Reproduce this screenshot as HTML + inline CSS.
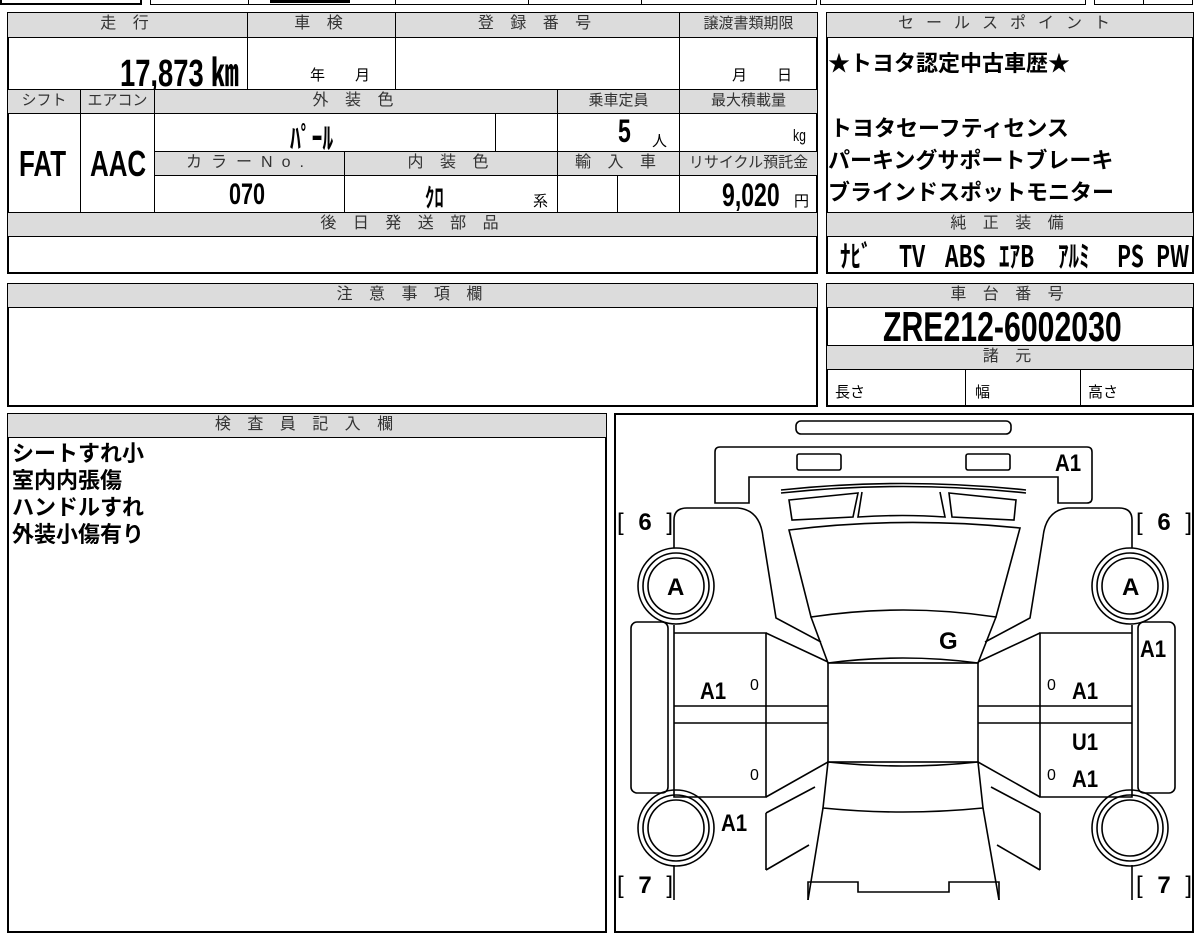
<!DOCTYPE html>
<html><head><meta charset="utf-8"><style>
*{margin:0;padding:0}
body{width:1200px;height:900px;background:#fff;position:relative;overflow:hidden;font-family:"Liberation Sans","Noto Sans CJK JP",sans-serif;color:#000}
.c{position:absolute;border:1.5px solid #000;box-sizing:border-box}
.h{background:#dcdcdc;color:#333;font-size:16px;text-align:center;letter-spacing:6px;line-height:22px;white-space:nowrap;overflow:hidden}
.h.s{letter-spacing:0;font-size:15px}
.t{position:absolute;white-space:nowrap;font-weight:bold}
.cond{display:inline-block;transform:scaleX(.72);transform-origin:left center}
.j{font-weight:bold;font-size:22px}
.eq{position:absolute;top:236px;height:36px;line-height:36px;font-size:30px;font-weight:bold;white-space:nowrap;font-family:"Noto Sans CJK JP",sans-serif}
.eq span{display:inline-block;transform:scaleX(.7);transform-origin:left center}
</style></head><body>
<!-- top strip -->
<div class="c" style="left:0;top:-20px;width:142px;height:25px;border-width:2px"></div>
<div class="c" style="left:150px;top:-20px;width:99px;height:25px"></div>
<div class="c" style="left:248px;top:-20px;width:148px;height:25px"></div>
<div style="position:absolute;left:270px;top:0;width:80px;height:3px;background:#000"></div>
<div class="c" style="left:395px;top:-20px;width:134px;height:25px"></div>
<div class="c" style="left:528px;top:-20px;width:114px;height:25px"></div>
<div class="c" style="left:641px;top:-20px;width:176px;height:25px"></div>
<div class="c" style="left:820px;top:-20px;width:266px;height:25px"></div>
<div class="c" style="left:1094px;top:-20px;width:50px;height:25px"></div>
<div class="c" style="left:1143px;top:-20px;width:50px;height:25px"></div>

<!-- main table -->
<div class="c" style="left:7px;top:12px;width:811px;height:262px;border-width:2px"></div>
<div class="c h" style="left:7px;top:12px;width:241px;height:26px">走 行</div>
<div class="c h" style="left:247px;top:12px;width:149px;height:26px">車 検</div>
<div class="c h" style="left:395px;top:12px;width:285px;height:26px">登 録 番 号</div>
<div class="c h s" style="left:679px;top:12px;width:139px;height:26px">譲渡書類期限</div>
<div class="c" style="left:7px;top:37px;width:241px;height:53px"></div>
<div class="c" style="left:247px;top:37px;width:149px;height:53px"></div>
<div class="c" style="left:395px;top:37px;width:285px;height:53px"></div>
<div class="c" style="left:679px;top:37px;width:139px;height:53px"></div>
<div class="t" style="left:120px;top:42px;font-size:38px"><span class="cond">17,873 ㎞</span></div>
<div class="t" style="left:310px;top:64px;font-size:15px;font-weight:normal">年　　月</div>
<div class="t" style="left:732px;top:64px;font-size:15px;font-weight:normal">月　　日</div>

<div class="c h s" style="left:7px;top:89px;width:74px;height:25px">シフト</div>
<div class="c h s" style="left:80px;top:89px;width:75px;height:25px">エアコン</div>
<div class="c h" style="left:154px;top:89px;width:404px;height:25px">外 装 色</div>
<div class="c h s" style="left:557px;top:89px;width:123px;height:25px">乗車定員</div>
<div class="c h s" style="left:679px;top:89px;width:139px;height:25px">最大積載量</div>
<div class="c" style="left:7px;top:113px;width:74px;height:100px"></div>
<div class="c" style="left:80px;top:113px;width:75px;height:100px"></div>
<div class="t" style="left:19px;top:143px;font-size:36px"><span class="cond">FAT</span></div>
<div class="t" style="left:90px;top:143px;font-size:36px"><span class="cond">AAC</span></div>
<div class="c" style="left:154px;top:113px;width:342px;height:39px"></div>
<div class="c" style="left:495px;top:113px;width:63px;height:39px"></div>
<div class="c" style="left:557px;top:113px;width:123px;height:39px"></div>
<div class="c" style="left:679px;top:113px;width:139px;height:39px"></div>
<div class="t" style="left:290px;top:114px;font-size:30px"><span class="cond">ﾊﾟｰﾙ</span></div>
<div class="t" style="left:618px;top:113px;font-size:32px"><span class="cond">5</span></div>
<div class="t" style="left:652px;top:130px;font-size:15px;font-weight:normal">人</div>
<div class="t" style="left:793px;top:126px;font-size:17px;font-weight:normal"><span class="cond">kg</span></div>
<div class="c h" style="left:154px;top:151px;width:191px;height:25px;letter-spacing:9px">カラーNo.</div>
<div class="c h" style="left:344px;top:151px;width:214px;height:25px">内 装 色</div>
<div class="c h" style="left:557px;top:151px;width:123px;height:25px">輸 入 車</div>
<div class="c h s" style="left:679px;top:151px;width:139px;height:25px">リサイクル預託金</div>
<div class="c" style="left:154px;top:175px;width:191px;height:38px"></div>
<div class="c" style="left:344px;top:175px;width:214px;height:38px"></div>
<div class="c" style="left:557px;top:175px;width:61px;height:38px"></div>
<div class="c" style="left:617px;top:175px;width:63px;height:38px"></div>
<div class="c" style="left:679px;top:175px;width:139px;height:38px"></div>
<div class="t" style="left:229px;top:178px;font-size:30px"><span class="cond">070</span></div>
<div class="t" style="left:425px;top:178px;font-size:26px"><span class="cond">ｸﾛ</span></div>
<div class="t" style="left:533px;top:190px;font-size:15px;font-weight:normal">系</div>
<div class="t" style="left:722px;top:177px;font-size:32px"><span class="cond">9,020</span></div>
<div class="t" style="left:794px;top:190px;font-size:15px;font-weight:normal">円</div>
<div class="c h" style="left:7px;top:212px;width:811px;height:25px">後 日 発 送 部 品</div>

<!-- sales point -->
<div class="c" style="left:826px;top:12px;width:368px;height:262px;border-width:2px"></div>
<div class="c h" style="left:826px;top:12px;width:368px;height:26px;letter-spacing:12px">セールスポイント</div>
<div class="t j" style="left:828px;top:46px">★トヨタ認定中古車歴★</div>
<div class="t j" style="left:830px;top:111px">トヨタセーフティセンス</div>
<div class="t j" style="left:828px;top:143px">パーキングサポートブレーキ</div>
<div class="t j" style="left:828px;top:175px">ブラインドスポットモニター</div>
<div class="c h" style="left:826px;top:212px;width:368px;height:25px">純 正 装 備</div>
<div class="eq" style="left:840px"><span>ﾅﾋﾞ</span></div>
<div class="eq" style="left:899px"><span>TV</span></div>
<div class="eq" style="left:945px"><span>ABS</span></div>
<div class="eq" style="left:999px"><span>ｴｱB</span></div>
<div class="eq" style="left:1058px"><span>ｱﾙﾐ</span></div>
<div class="eq" style="left:1117px"><span>PS</span></div>
<div class="eq" style="left:1156px"><span>PW</span></div>

<!-- notes -->
<div class="c" style="left:7px;top:283px;width:811px;height:124px;border-width:2px"></div>
<div class="c h" style="left:7px;top:283px;width:811px;height:25px">注 意 事 項 欄</div>

<!-- chassis -->
<div class="c" style="left:826px;top:283px;width:368px;height:124px;border-width:2px"></div>
<div class="c h" style="left:826px;top:283px;width:368px;height:25px">車 台 番 号</div>
<div class="t" style="left:883px;top:303px;font-size:42px"><span class="cond">ZRE212-6002030</span></div>
<div class="c h" style="left:826px;top:345px;width:368px;height:25px">諸 元</div>
<div class="c" style="left:826px;top:369px;width:140px;height:38px"></div>
<div class="c" style="left:965px;top:369px;width:116px;height:38px"></div>
<div class="t" style="left:835px;top:381px;font-size:15px;font-weight:normal">長さ</div>
<div class="t" style="left:975px;top:381px;font-size:15px;font-weight:normal">幅</div>
<div class="t" style="left:1088px;top:381px;font-size:15px;font-weight:normal">高さ</div>

<!-- inspector -->
<div class="c" style="left:7px;top:413px;width:600px;height:520px;border-width:2px"></div>
<div class="c h" style="left:7px;top:413px;width:600px;height:25px">検 査 員 記 入 欄</div>
<div class="t j" style="left:12px;top:440px;line-height:27px;font-size:22px">シートすれ小<br>室内内張傷<br>ハンドルすれ<br>外装小傷有り</div>

<!-- diagram -->
<div class="c" style="left:614px;top:413px;width:580px;height:520px;border-width:2px"></div>
<svg style="position:absolute;left:0;top:0" width="1200" height="900" fill="none" stroke="#000" stroke-width="1.6">
<rect x="796" y="421" width="215" height="13" rx="5"/>
<path d="M715,503 L715,452 Q715,447 720,447 L1087,447 Q1092,447 1092,452 L1092,498 Q1092,503 1087,503 L1058,503 L1058,477 L749,477 L749,503 Z"/>
<rect x="797" y="454" width="44" height="16" rx="2"/>
<rect x="966" y="454" width="44" height="16" rx="2"/>
<path d="M781,490 Q903,477 1026,490 M781,493 Q903,480 1026,493"/>
<path d="M789,500 L858,493 L853,517 L792,520 Z"/>
<path d="M949,493 L1016,500 L1014,520 L952,517 Z"/>
<path d="M862,492 L858,517 Q903,514 945,517 L940,492"/>
<path d="M789,530 Q903,516 1020,528 L996,617 Q903,603 811,617 Z"/>
<path d="M811,617 L828,663 Q903,653 978,663 L996,617"/>
<rect x="828" y="663" width="150" height="99"/>
<path d="M828,762 Q903,770 978,762 L983,808 Q903,816 823,808 Z"/>
<path d="M823,808 L808,900 M983,808 L999,900"/>
<path d="M808,900 L808,882 L858,882 L858,892 L949,892 L949,882 L999,882 L999,900"/>
<g id="side">
<path d="M674,548 L674,520 Q674,508 687,508 L738,508 Q760,510 763,537 L776,618 L821,642"/>
<path d="M674,625 L674,797 L766,797 L766,633 L674,633"/>
<path d="M674,706 L828,706 M674,723 L828,723"/>
<path d="M766,633 L828,662 M766,797 L828,762"/>
<path d="M766,813 L815,787 M766,870 L809,845 M766,813 L766,870"/>
<path d="M674,865 L674,900"/>
<rect x="631" y="622" width="37" height="171" rx="6"/>
<circle cx="676" cy="586" r="38"/><circle cx="676" cy="586" r="33"/><circle cx="676" cy="586" r="28"/>
<circle cx="676" cy="828" r="38"/><circle cx="676" cy="828" r="33"/><circle cx="676" cy="828" r="28"/>
</g>
<use href="#side" transform="matrix(-1 0 0 1 1806 0)"/>
</svg>
<div style="position:absolute;font-weight:bold;font-size:24px;white-space:nowrap">
<span style="position:absolute;left:1055px;top:450px"><span class="cond" style="transform:scaleX(.85)">A1</span></span>
<span style="position:absolute;left:617px;top:509px;font-weight:normal;letter-spacing:4px">[ <b>6</b> ]</span>
<span style="position:absolute;left:1136px;top:509px;font-weight:normal;letter-spacing:4px">[ <b>6</b> ]</span>
<span style="position:absolute;left:667px;top:574px">A</span>
<span style="position:absolute;left:1122px;top:574px">A</span>
<span style="position:absolute;left:939px;top:628px">G</span>
<span style="position:absolute;left:1140px;top:636px"><span class="cond" style="transform:scaleX(.85)">A1</span></span>
<span style="position:absolute;left:700px;top:678px"><span class="cond" style="transform:scaleX(.85)">A1</span></span>
<span style="position:absolute;left:1072px;top:678px"><span class="cond" style="transform:scaleX(.85)">A1</span></span>
<span style="position:absolute;left:1072px;top:729px"><span class="cond" style="transform:scaleX(.85)">U1</span></span>
<span style="position:absolute;left:1072px;top:766px"><span class="cond" style="transform:scaleX(.85)">A1</span></span>
<span style="position:absolute;left:721px;top:810px"><span class="cond" style="transform:scaleX(.85)">A1</span></span>
<span style="position:absolute;left:617px;top:872px;font-weight:normal;letter-spacing:4px">[ <b>7</b> ]</span>
<span style="position:absolute;left:1136px;top:872px;font-weight:normal;letter-spacing:4px">[ <b>7</b> ]</span>
<span style="position:absolute;left:750px;top:677px;font-size:16px;font-weight:normal">0</span>
<span style="position:absolute;left:750px;top:767px;font-size:16px;font-weight:normal">0</span>
<span style="position:absolute;left:1047px;top:677px;font-size:16px;font-weight:normal">0</span>
<span style="position:absolute;left:1047px;top:767px;font-size:16px;font-weight:normal">0</span>
</div>
</body></html>
